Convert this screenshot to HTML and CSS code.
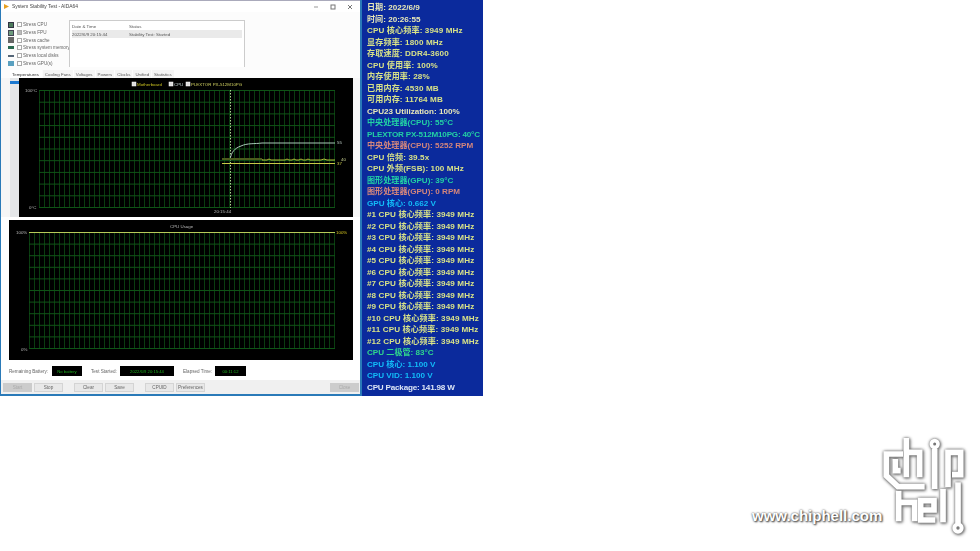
FILE: index.html
```html
<!DOCTYPE html>
<html lang="zh">
<head>
<meta charset="utf-8">
<title>System Stability Test - AIDA64</title>
<link rel="stylesheet" href="styles.css">
</head>
<body>
<div class="top">
  <section class="window">
    <header class="titlebar">
      <svg class="appicon" width="7" height="7" viewBox="0 0 7 7"><path d="M1 1 L6 3.5 L1 6 Z" fill="#e8a020"/></svg>
      <span class="title">System Stability Test - AIDA64</span>
      <span class="controls">
        <svg width="6" height="6" viewBox="0 0 6 6"><path d="M1 3H5" stroke="#999" fill="none"/></svg>
        <svg width="6" height="6" viewBox="0 0 6 6"><rect x="1" y="1" width="4" height="4" stroke="#777" fill="none"/></svg>
        <svg width="6" height="6" viewBox="0 0 6 6"><path d="M1 1L5 5M5 1L1 5" stroke="#777" fill="none"/></svg>
      </span>
    </header>
    <div class="upper">
      <ul class="stress">
        <li><i class="ico ico-cpu"></i><b class="check"></b>Stress CPU</li>
        <li><i class="ico ico-fpu"></i><b class="check on"></b>Stress FPU</li>
        <li><i class="ico ico-cache"></i><b class="check"></b>Stress cache</li>
        <li><i class="ico ico-mem"></i><b class="check"></b>Stress system memory</li>
        <li><i class="ico ico-disk"></i><b class="check"></b>Stress local disks</li>
        <li><i class="ico ico-gpu"></i><b class="check"></b>Stress GPU(s)</li>
      </ul>
      <div class="log">
        <div class="logrow"><span>Date &amp; Time</span><span>Status</span></div>
        <div class="logrow sel"><span>2022/6/9 20:15:44</span><span>Stability Test: Started</span></div>
      </div>
    </div>
    <nav class="tabs">
      <span class="tab active">Temperatures</span><span class="tab">Cooling Fans</span><span class="tab">Voltages</span><span class="tab">Powers</span><span class="tab">Clocks</span><span class="tab">Unified</span><span class="tab">Statistics</span>
    </nav>
    <div class="chart-top">
      <div class="sensors"><i></i></div>
      <svg class="plot" width="334" height="139" viewBox="0 0 334 139">
        <defs>
          <pattern id="g1" x="20" y="12" width="5" height="11.7" patternUnits="userSpaceOnUse">
            <path d="M.5 0V11.7" stroke="#0a3c10" fill="none"/>
            <path d="M0 .5H5" stroke="#0f5416" fill="none"/>
          </pattern>
        </defs>
        <rect width="334" height="139" fill="#000"/>
        <rect x="20" y="12" width="296" height="118" fill="url(#g1)"/>
        <text class="lbl" x="6" y="14">100°C</text>
        <text class="lbl" x="10" y="131">0°C</text>
        <rect class="box" x="113" y="4" width="4" height="4"/>
        <text class="leg" x="118" y="8" fill="#c8c020">Motherboard</text>
        <rect class="box" x="150" y="4" width="4" height="4"/>
        <text class="leg" x="155" y="8" fill="#c8d8d8">CPU</text>
        <rect class="box" x="167" y="4" width="4" height="4"/>
        <text class="leg" x="172" y="8" fill="#d0d060">PLEXTOR PX-512M10PG</text>
        <path d="M211.5 12V130" stroke="#a8d890" stroke-dasharray="1.5 1.5" fill="none"/>
        <path d="M211 82C212 74 216 70 222 68C228 65 236 66 243 65H316" stroke="#a8c8b8" fill="none"/>
        <path d="M203 81H243V82H248L250 81L252 82H266L268 81L270 82H273L275 81L277 82H280L282 81L284 82H287L289 81L291 82H302L305 81L308 82H316" stroke="#b0c038" fill="none"/>
        <path d="M203 85.500H316" stroke="#c8c848" fill="none"/>
        <path d="M203 80H243V82H203Z" fill="#4a5a1c"/>
        <text class="val" x="318" y="66" fill="#b8c8c0">55</text>
        <text class="val" x="322" y="83" fill="#c8d090">40</text>
        <text class="val" x="318" y="87" fill="#c8c848">37</text>
        <text class="lbl" x="195" y="135">20:15:44</text>
      </svg>
    </div>
    <div class="chart-bottom">
      <svg class="plot" width="344" height="140" viewBox="0 0 344 140">
        <defs>
          <pattern id="g2" x="20" y="12" width="5" height="11.6" patternUnits="userSpaceOnUse">
            <path d="M.5 0V11.6" stroke="#0a3c10" fill="none"/>
            <path d="M0 .5H5" stroke="#0f5416" fill="none"/>
          </pattern>
        </defs>
        <rect width="344" height="140" fill="#000"/>
        <rect x="20" y="12" width="306" height="117" fill="url(#g2)"/>
        <path d="M20 12.500H326" stroke="#b8c858" fill="none"/>
        <text class="lbl" x="161" y="8">CPU Usage</text>
        <text class="lbl" x="7" y="14">100%</text>
        <text class="lbl" x="12" y="131">0%</text>
        <text class="val" x="327" y="14" fill="#d8c820">100%</text>
      </svg>
    </div>
    <div class="status">
      <span class="st-l st-a">Remaining Battery:</span><span class="lcd lcd-a">No battery</span>
      <span class="st-l st-b">Test Started:</span><span class="lcd lcd-b">2022/6/9 20:15:44</span>
      <span class="st-l st-c">Elapsed Time:</span><span class="lcd lcd-c">00:11:12</span>
    </div>
    <footer class="buttons">
      <button class="btn dis">Start</button><button class="btn">Stop</button>
      <button class="btn gap-a">Clear</button><button class="btn">Save</button>
      <button class="btn gap-a">CPUID</button><button class="btn">Preferences</button>
      <button class="btn dis close">Close</button>
    </footer>
  </section>
  <aside class="stats">
    <div class="c1">日期: 2022/6/9</div>
    <div class="c1">时间: 20:26:55</div>
    <div class="c2">CPU 核心频率: 3949 MHz</div>
    <div class="c2">显存频率: 1800 MHz</div>
    <div class="c2">存取速度: DDR4-3600</div>
    <div class="c2">CPU 使用率: 100%</div>
    <div class="c2">内存使用率: 28%</div>
    <div class="c2">已用内存: 4530 MB</div>
    <div class="c2">可用内存: 11764 MB</div>
    <div class="c1">CPU23 Utilization: 100%</div>
    <div class="c3">中央处理器(CPU): 55°C</div>
    <div class="c3 tight">PLEXTOR PX-512M10PG: 40°C</div>
    <div class="c4">中央处理器(CPU): 5252 RPM</div>
    <div class="c2">CPU 倍频: 39.5x</div>
    <div class="c2">CPU 外频(FSB): 100 MHz</div>
    <div class="c3">图形处理器(GPU): 39°C</div>
    <div class="c4">图形处理器(GPU): 0 RPM</div>
    <div class="c5">GPU 核心: 0.662 V</div>
    <div class="c2">#1 CPU 核心频率: 3949 MHz</div>
    <div class="c2">#2 CPU 核心频率: 3949 MHz</div>
    <div class="c2">#3 CPU 核心频率: 3949 MHz</div>
    <div class="c2">#4 CPU 核心频率: 3949 MHz</div>
    <div class="c2">#5 CPU 核心频率: 3949 MHz</div>
    <div class="c2">#6 CPU 核心频率: 3949 MHz</div>
    <div class="c2">#7 CPU 核心频率: 3949 MHz</div>
    <div class="c2">#8 CPU 核心频率: 3949 MHz</div>
    <div class="c2">#9 CPU 核心频率: 3949 MHz</div>
    <div class="c2">#10 CPU 核心频率: 3949 MHz</div>
    <div class="c2">#11 CPU 核心频率: 3949 MHz</div>
    <div class="c2">#12 CPU 核心频率: 3949 MHz</div>
    <div class="c6">CPU 二极管: 83°C</div>
    <div class="c5">CPU 核心: 1.100 V</div>
    <div class="c5">CPU VID: 1.100 V</div>
    <div class="c7 tight">CPU Package: 141.98 W</div>
  </aside>
</div>
<div class="watermark">
  <span class="wm-text">www.chiphell.com</span>
  <svg class="wm-logo" width="90" height="100" viewBox="0 0 270 300">
    <g fill="none" stroke="#fff" stroke-width="17">
      <path d="M75 60H25V125L60 158H140"/>
      <path d="M52 75V110H68"/>
      <path d="M85 12V130M85 55H125V130"/>
      <path d="M170 45V165"/>
      <path d="M210 160V55H248V122H222"/>
      <path d="M62 170V262M62 205H110V262"/>
      <path d="M172 258H128V200H168V228H135"/>
      <path d="M195 165V265"/>
      <path d="M240 145V268"/>
      <circle cx="170" cy="30" r="10" stroke-width="11"/>
      <circle cx="240" cy="282" r="11" stroke-width="12"/>
    </g>
  </svg>
</div>
</body>
</html>
```
FILE: styles.css
```css
* { box-sizing: border-box; }
html, body { margin: 0; padding: 0; background: #fff; }
body {
  width: 980px;
  height: 551px;
  overflow: hidden;
  position: relative;
  font-family: "Liberation Sans", "Noto Sans CJK SC", sans-serif;
}
.top { display: flex; align-items: flex-start; }

.window {
  width: 362px;
  height: 396px;
  border-left: 1px solid #2a7ab8;
  border-right: 2px solid #2a7ab8;
  border-bottom: 2px solid #2a7ab8;
  background: #fff;
  display: flex;
  flex-direction: column;
  font-size: 4.5px;
  color: #555;
  filter: blur(0.25px);
}
.titlebar {
  height: 12px;
  display: flex;
  align-items: center;
  gap: 2px;
  padding: 0 5px 0 2px;
  border-top: 1px solid #aab;
  flex: none;
}
.title { font-size: 4.9px; color: #444; }
.controls { margin-left: auto; display: flex; gap: 11px; padding-right: 2px; }
.controls svg { display: block; }

.upper {
  display: flex;
  height: 55px;
  padding: 8px 0 0 7px;
  background: #fcfcfc;
  flex: none;
}
.stress {
  list-style: none;
  margin: 0;
  padding: 1px 0 0;
  width: 61px;
  font-size: 4.6px;
}
.stress li { height: 7.7px; display: flex; align-items: center; white-space: nowrap; color: #666; }
.ico { width: 6px; height: 6px; margin-right: 3px; flex: none; }
.ico-cpu { background: #4d7b5c; border: 1px solid #334; }
.ico-fpu { background: #6c9a7c; border: 1px solid #445; }
.ico-cache { background: #666; }
.ico-mem { background: #2a6a50; height: 3px; }
.ico-disk { background: #567; height: 2px; }
.ico-gpu { background: #5aa0c0; height: 5px; }
.check { width: 5px; height: 5px; border: 1px solid #aaa; background: #fff; margin-right: 1px; flex: none; }
.check.on { background: #bbb; }

.log {
  width: 176px;
  height: 48px;
  border: 1px solid #ccc;
  background: #fff;
  padding: 1px 2px 0;
  font-size: 4.4px;
  color: #555;
}
.logrow { height: 8px; display: flex; align-items: center; }
.logrow span:first-child { width: 57px; }
.logrow.sel { background: #eaeaea; }

.tabs {
  display: flex;
  height: 11px;
  padding: 3px 0 0 9px;
  font-size: 4.4px;
  color: #555;
  background: #fcfcfc;
  flex: none;
}
.tab { padding: 0 2px; margin-right: 1px; background: #f4f4f4; height: 8px; display: flex; align-items: center; white-space: nowrap; }
.tab.active { background: #fff; color: #333; padding: 0 3px 0 2px; }

.chart-top { display: flex; padding: 0 0 0 9px; height: 139px; flex: none; background: #f6f6f6; }
.sensors { width: 9px; height: 139px; background: #e4e6e8; flex: none; padding-top: 3px; }
.sensors i { display: block; height: 3px; background: #1a78d0; }
.plot { display: block; flex: none; }
.chart-bottom { padding: 3px 0 0 8px; height: 143px; flex: none; }

.lbl { font: 4.4px "Liberation Sans", sans-serif; fill: #bbb; }
.leg { font: 4.4px "Liberation Sans", sans-serif; }
.val { font: 4.4px "Liberation Sans", sans-serif; }
.box { fill: #ddd; stroke: #fff; stroke-width: .5; }

.status {
  display: flex;
  align-items: center;
  height: 20px;
  padding: 2px 0 0 8px;
  font-size: 4.6px;
  color: #666;
  flex: none;
}
.lcd {
  height: 10px;
  background: #000;
  color: #1fb01f;
  font-size: 4.2px;
  display: flex;
  align-items: center;
  justify-content: center;
  flex: none;
}
.st-a { width: 43px; }
.st-b { width: 29px; margin-left: 9px; }
.st-c { width: 32px; margin-left: 9px; }
.lcd-a { width: 30px; }
.lcd-b { width: 54px; }
.lcd-c { width: 31px; }

.buttons {
  display: flex;
  align-items: center;
  height: 14px;
  padding: 0 1px 0 2px;
  background: #f0f0f0;
  flex: none;
}
.btn {
  width: 29px;
  height: 9px;
  padding: 0;
  margin-right: 2px;
  font: 4.6px "Liberation Sans", sans-serif;
  color: #666;
  background: #e8e8e8;
  border: 1px solid #d4d4d4;
}
.btn.dis { background: #ccc; color: #aaa; border-color: #ccc; }
.gap-a { margin-left: 9px; }
.close { margin-left: auto; margin-right: 0; }

.stats {
  width: 121px;
  height: 396px;
  background: #0b2a9c;
  padding: 2px 0 0 5px;
  font-size: 8.1px;
  font-weight: 700;
  line-height: 11.5px;
  font-family: "Liberation Sans", "Noto Sans CJK SC", sans-serif;
  white-space: nowrap;
  overflow: hidden;
  filter: blur(0.25px);
}
.c1 { color: #e8e8b8; }
.c2 { color: #d8e288; letter-spacing: 0.12px; }
.c3 { color: #22d0a4; }
.c4 { color: #d4867c; }
.c5 { color: #12bcf8; }
.c6 { color: #30d88c; }
.c7 { color: #dde6f6; }
.stats .tight { letter-spacing: -0.2px; }

.watermark {
  position: absolute;
  left: 752px;
  top: 434px;
  width: 216px;
  height: 100px;
  display: flex;
  align-items: flex-end;
  justify-content: space-between;
}
.wm-text {
  font: 700 15px "Liberation Sans", sans-serif;
  color: #fff;
  text-shadow: 0 0 2px #444, 1px 1px 2px #333;
  margin-bottom: 10px;
  margin-right: -8px;
  white-space: nowrap;
}
.wm-logo { filter: drop-shadow(0 0 1.5px #666) drop-shadow(1px 1px 1px #888); display: block; flex: none; }
```
